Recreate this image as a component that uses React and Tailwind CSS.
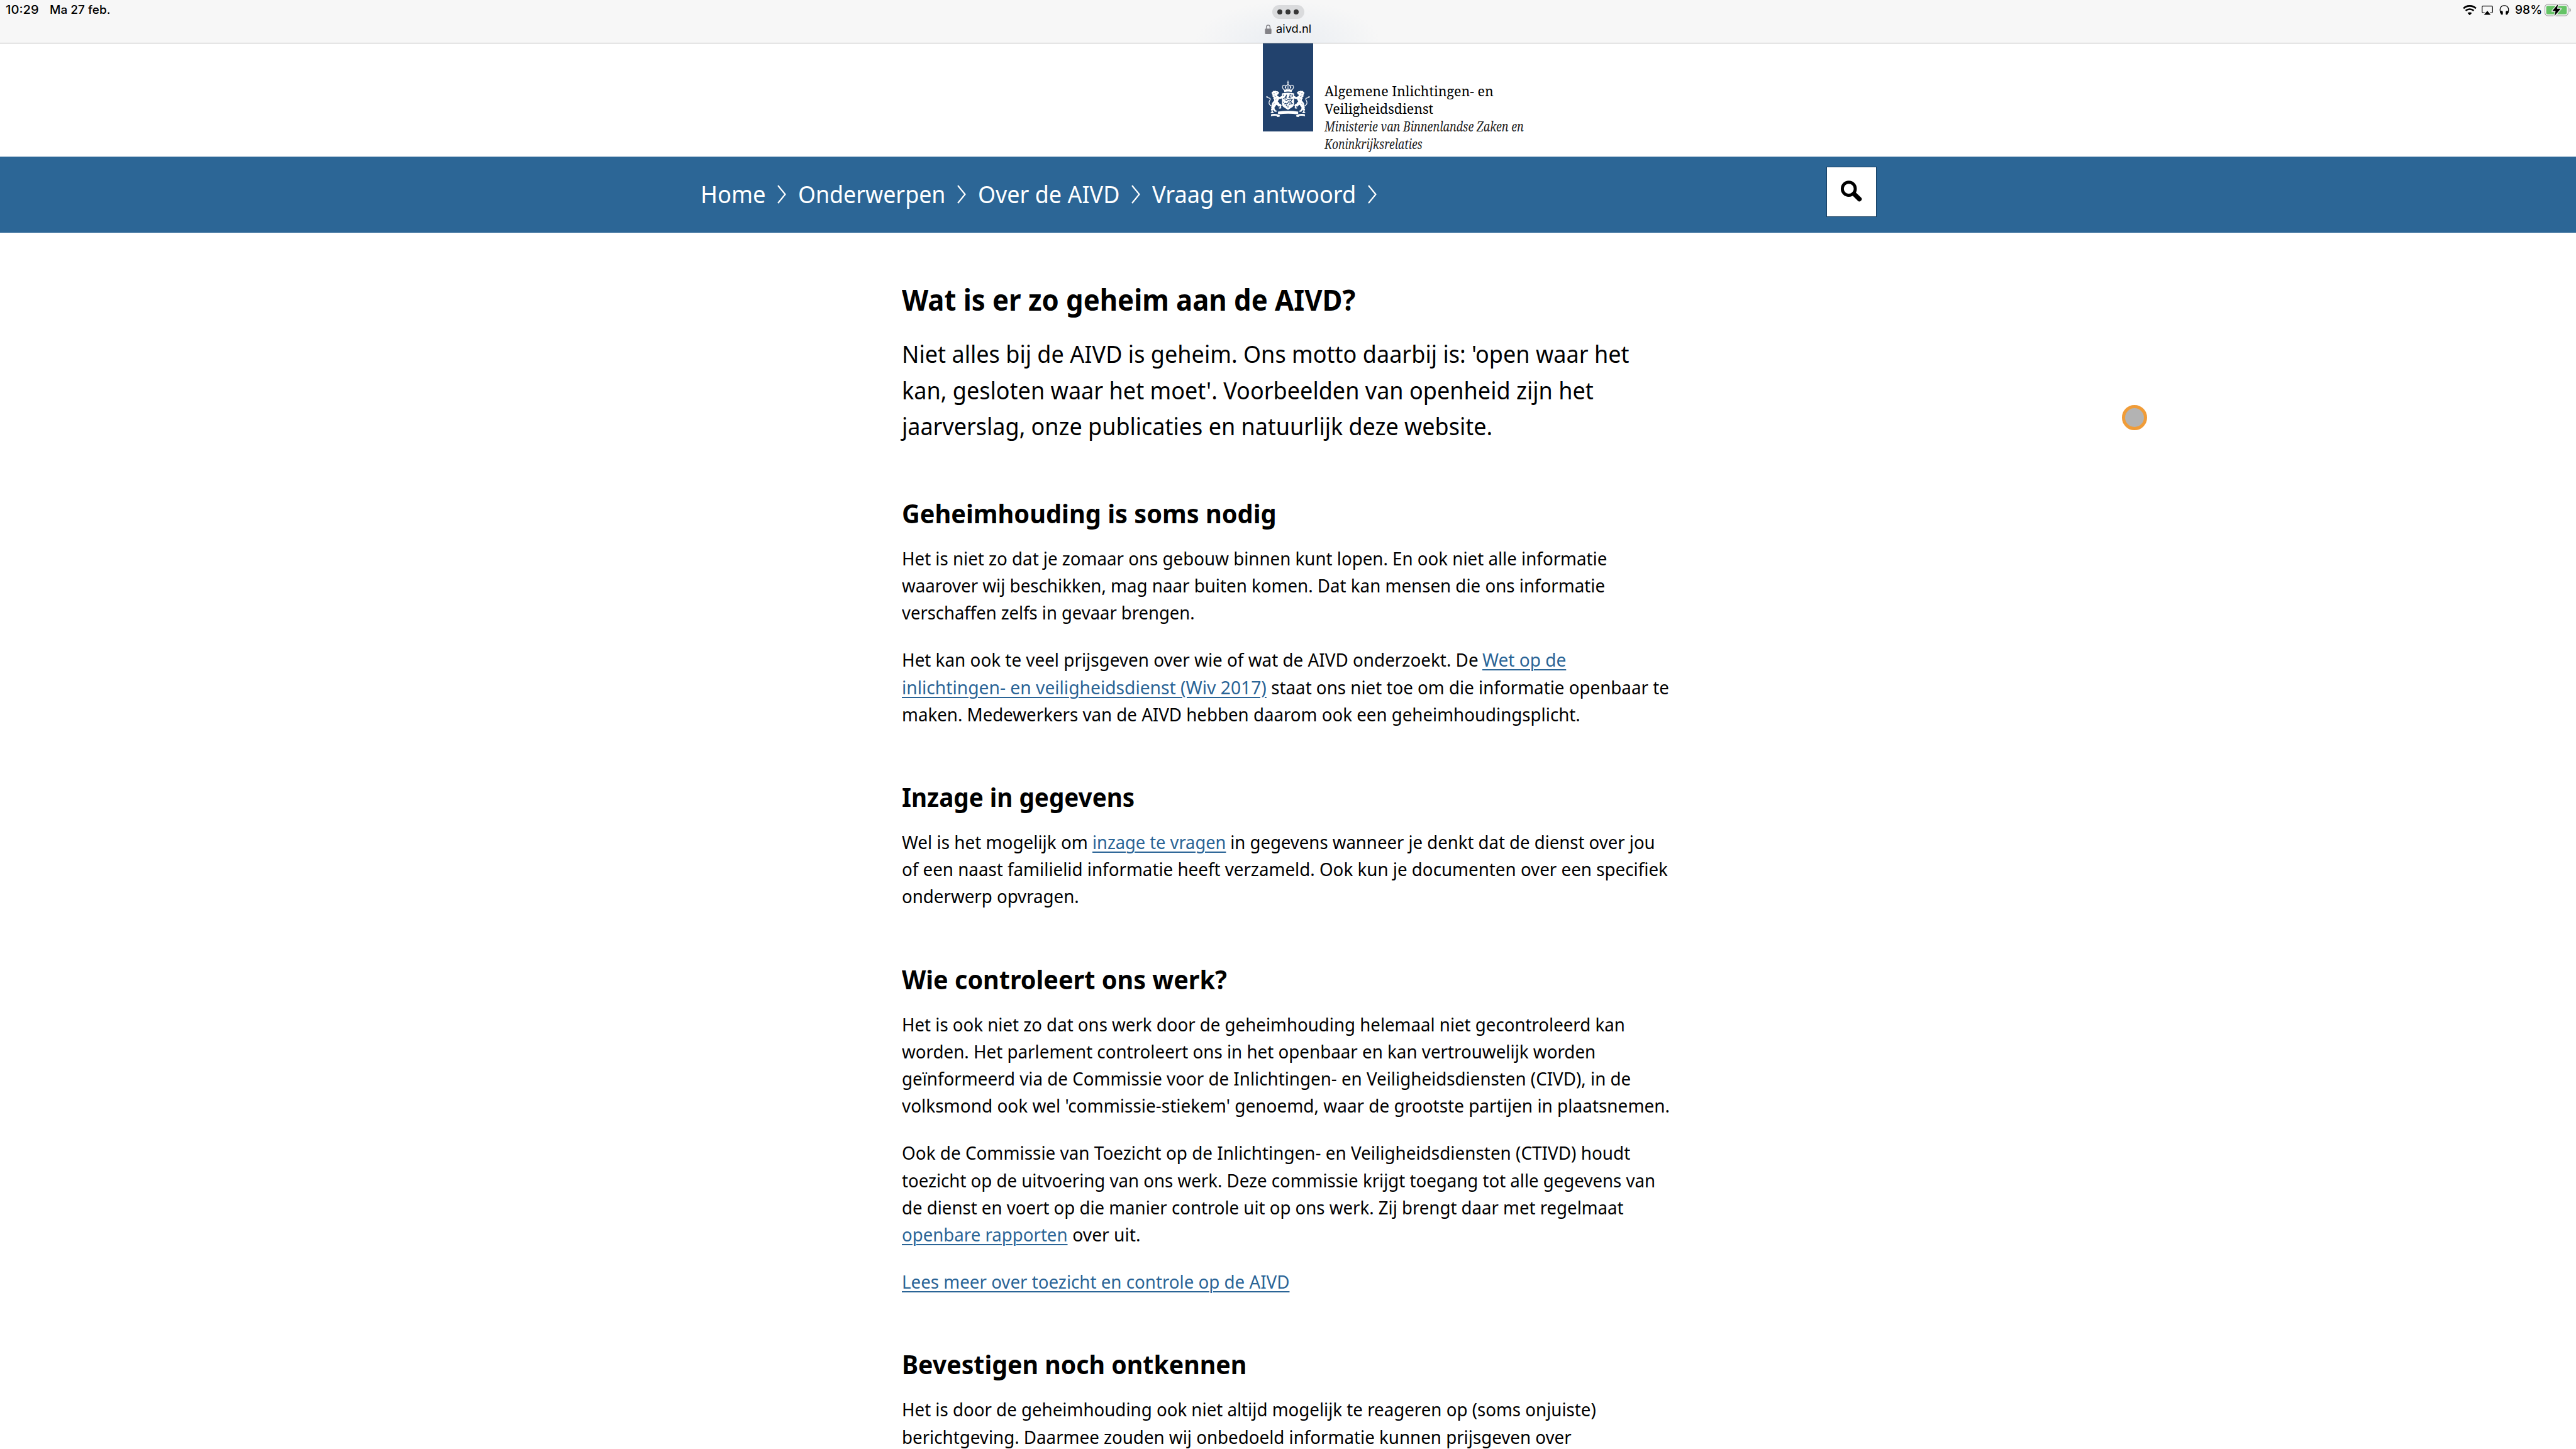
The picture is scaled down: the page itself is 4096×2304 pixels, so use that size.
import { useLayoutEffect, useRef, useState } from "react";

/* One run of text, condensed or widened to an exact advance width. */
function Fit({ w, children }) {
  const ref = useRef(null);
  const [scale, setScale] = useState(1);
  useLayoutEffect(() => {
    setScale(w / ref.current.offsetWidth);
  }, [w]);
  return (
    <span className="block shrink-0" style={{ width: w }}>
      <span ref={ref} className="inline-block origin-left whitespace-pre align-top" style={{ transform: `scaleX(${scale})` }}>
        {children}
      </span>
    </span>
  );
}

function Link({ children }) {
  return (
    <a href="#" className="text-[#2a6496] underline decoration-[2.4px] underline-offset-[4px]">
      {children}
    </a>
  );
}

function Heading({ w, children }) {
  return (
    <h2 className="mt-[80px] text-[42px] leading-[58px] font-bold">
      <Fit w={w}>{children}</Fit>
    </h2>
  );
}

/* Each line is a list of [width, content] runs set side by side. */
function Paragraph({ lines, className }) {
  return (
    <p className={`text-[29.3px] leading-[43.2px] ${className}`}>
      {lines.map((runs, i) => (
        <span key={i} className="flex">
          {runs.map(([w, content], j) => (
            <Fit key={j} w={w}>
              {content}
            </Fit>
          ))}
        </span>
      ))}
    </p>
  );
}

function StatusBar() {
  return (
    <div className="relative flex h-[69px] justify-between bg-[#f7f7f7] font-['Inter','Liberation_Sans',sans-serif] text-[18.3px] leading-[31px] font-[450] text-black">
      <div className="absolute top-0 left-[1898px] h-[69px] w-[300px] bg-[radial-gradient(ellipse_at_bottom,#e9edf2_0%,#f7f7f7_70%)]" />
      <div className="flex gap-[17px] pl-[9px]">
        <Fit w={53}>10:29</Fit>
        <Fit w={97}>Ma 27 feb.</Fit>
      </div>
      <div className="absolute left-1/2 flex -translate-x-1/2 flex-col items-center">
        <div className="mt-[8px] flex h-[22px] w-[51px] items-center justify-center gap-[4.8px] rounded-full bg-[#dadbdd]">
          <span className="size-[8px] rounded-full bg-[#373737]" />
          <span className="size-[8px] rounded-full bg-[#373737]" />
          <span className="size-[8px] rounded-full bg-[#373737]" />
        </div>
        <div className="mt-[2px] flex h-[28px] items-center gap-[7px] text-[17.3px] leading-[28px] font-normal">
          <svg viewBox="0 0 13 18" className="h-[15px] w-[11px]">
            <path d="M3 9V5a3.5 3.9 0 0 1 7 0v4" fill="none" stroke="#838287" strokeWidth="1.6" />
            <rect x="0.3" y="7.8" width="12.4" height="10.2" rx="1.6" fill="#838287" />
          </svg>
          <Fit w={56}>aivd.nl</Fit>
        </div>
      </div>
      <div className="flex pr-[8px]">
        <svg viewBox="106 29 82 60" className="mt-[8px] mr-[8px] h-[16px] w-[22px]">
          <path d="M110 49a53 53 0 0 1 74 0" fill="none" stroke="#000" strokeWidth="10" />
          <path d="M123 63a35 35 0 0 1 48 0" fill="none" stroke="#000" strokeWidth="10" />
          <path d="M134 77a19 19 0 0 1 26 0L147 90z" fill="#000" />
        </svg>
        <svg viewBox="219 30 66 60" className="mt-[8px] mr-[10px] h-[16px] w-[18px]">
          <path d="M236 76h-9a6 6 0 0 1-6-6V42a6 6 0 0 1 6-6h50a6 6 0 0 1 6 6v28a6 6 0 0 1-6 6h-9" fill="none" stroke="#000" strokeWidth="4.5" />
          <path d="M252 65l20 23h-40z" fill="#000" />
        </svg>
        <svg viewBox="323 29 60 62" className="mt-[8px] mr-[9px] h-[16px] w-[16px]">
          <path d="M331 78C321 54 330 32 353 32s32 22 22 46" fill="none" stroke="#000" strokeWidth="5" />
          <path d="M331 66c8-4 13 0 13 6v12c0 6-8 6-12 1l-5-12z" fill="#000" />
          <path d="M375 66c-8-4-13 0-13 6v12c0 6 8 6 12 1l5-12z" fill="#000" />
        </svg>
        <Fit w={43}>98%</Fit>
        <svg viewBox="592 23 158 74" className="mt-[6px] ml-[4px] h-[20px] w-[42px]">
          <rect x="594" y="26" width="139" height="68" rx="18" fill="none" stroke="#a3a3a3" strokeWidth="4.5" />
          <rect x="602" y="35" width="123" height="50" rx="10" fill="#65c466" />
          <path d="M741 48c11 4 11 20 0 24z" fill="#a3a3a3" />
          <path d="M673 24l-35 42h20l-7 30 38-44h-22z" fill="#000" stroke="#f7f7f7" strokeWidth="9" strokeLinejoin="round" paintOrder="stroke" />
        </svg>
      </div>
      <div className="absolute bottom-0 h-px w-full bg-[#b0b0b0]" />
    </div>
  );
}

function LionSupporter() {
  return (
    <g transform="translate(0 4) scale(1 0.95)">
      <path d="M40 88L42 80 48 77 50 73 57 74 63 72 69 75 77 76 83 81 86 87 79 91 80 95 74 96 74 102 79 107 89 111 101 104 109 105 106 109 111 112 105 115 102 120 91 123 85 124 81 132 77 140 83 145 87 153 95 156 100 164 96 173 99 181 90 184 83 182 84 177 91 175 89 170 81 171 76 165 68 161 63 169 57 177 59 187 65 195 73 198 70 203 60 204 55 200 49 191 46 195 48 204 54 209 50 213 39 212 33 209 40 204 39 196 36 189 40 181 37 176 41 168 41 160 43 150 50 140 56 133 54 125 50 120 53 113 45 108 49 103 42 99 46 94z" fill="#fff" />
      <path d="M40 168c-10-5-16-14-15-24 1-9 9-15 7-22-2-6-12-2-18-10l-6-3" fill="none" stroke="#fff" strokeWidth="4.5" />
      <path d="M9 109l7-2 4 6-8 2z" fill="#fff" />
      <path d="M66 83l7 1M52 88l7 3M55 104l12 5M70 122l-8 6M58 150l-8 8" stroke="#22426d" strokeWidth="2" />
    </g>
  );
}

function CoatOfArms() {
  return (
    <svg viewBox="0 0 276 240" className="mt-[56px] ml-[3px] h-[64px] w-[74px]">
      <path d="M138 12v24M132 21h12" stroke="#fff" strokeWidth="4" />
      <circle cx="138" cy="34" r="4.5" fill="#fff" />
      <path d="M116 68c-12-10-14-22-6-27 7-4 13 0 13 6M160 68c12-10 14-22 6-27-7-4-13 0-13 6M127 66c-5-14-4-22 4-27M149 66c5-14 4-22-4-27M138 38v28" fill="none" stroke="#fff" strokeWidth="5" strokeDasharray="7 1" />
      <circle cx="121" cy="52" r="3" fill="#fff" />
      <circle cx="155" cy="52" r="3" fill="#fff" />
      <path d="M113 64l10 4 5-6 5 5 5-6 5 6 5-5 5 6 10-4-3 16c-14-4-30-4-44 0z" fill="#fff" />
      <LionSupporter />
      <g transform="translate(276 0) scale(-1 1)">
        <LionSupporter />
      </g>
      <path d="M102 88q36-7 72 0v64c0 18-22 24-36 35-14-11-36-17-36-35z" fill="#fff" />
      <path d="M108 96h4v6h-4zM108 116h4v6h-4zM108 138h4v6h-4zM164 96h4v12h-4zM164 120h4v6h-4zM164 146h4v6h-4z" fill="#22426d" />
      <path d="M131 96l-13 20h14M129 101l-4 16M147 94l9 1v16l-7 5-9-5M147 100v12M118 126l12 5 7-6 10 2 8-6 5 3-4 12-10 4-6-2-3 8-7 5-8-4-6 5M150 138l9 5-2 9-9-2-4 8M138 160v13M126 156l4 8" fill="none" stroke="#22426d" strokeWidth="4" />
      <path d="M78 197q60-9 121 0l-1 17q-59-10-119 0z" fill="#fff" />
      <path d="M38 212q18-4 33 0l5-3v7l13 2v8q-12 4-17 1l-2-5q-18-2-34 3z" fill="#fff" />
      <path d="M238 212q-18-4-33 0l-5-3v7l-13 2v8q12 4 17 1l2-5q18-2 34 3z" fill="#fff" />
    </svg>
  );
}

function Header() {
  return (
    <header className="flex h-[180px] pl-[2008px]">
      <div className="h-[140px] w-[80px] bg-[#22426d]">
        <CoatOfArms />
      </div>
      <div className="mt-[61.5px] ml-[17.5px] font-['Noto_Serif','Liberation_Serif',serif] text-[22.4px] leading-[28.2px] text-black">
        <Fit w={268.5}>Algemene Inlichtingen- en</Fit>
        <Fit w={173.5}>Veiligheidsdienst</Fit>
        <div className="text-[#222] italic">
          <Fit w={317}>Ministerie van Binnenlandse Zaken en</Fit>
          <Fit w={156}>Koninkrijksrelaties</Fit>
        </div>
      </div>
    </header>
  );
}

const crumbs = [
  ["Home", 103.5],
  ["Onderwerpen", 234.5],
  ["Over de AIVD", 225],
  ["Vraag en antwoord", 324.5],
];

function Nav() {
  return (
    <nav className="flex h-[121px] justify-between bg-[#2c6696] pr-[1112px] pl-[1114px] text-white">
      <ol className="flex pt-[33px] text-[38px] leading-[52px]">
        {crumbs.map(([label, w]) => (
          <li key={label} className="flex">
            <Fit w={w}>{label}</Fit>
            <svg viewBox="0 0 14 30" className="mx-[18.8px] mt-[12px] h-[30px] w-[14px]">
              <path d="M1 1l11.5 14L1 29" fill="none" stroke="#fff" strokeWidth="2.2" />
            </svg>
          </li>
        ))}
      </ol>
      <button className="mt-[15.8px] size-[80px] border-[1.6px] border-[#173e60] bg-white">
        <svg viewBox="2 2 96 96" className="size-full">
          <circle cx="44.7" cy="44" r="12.7" fill="none" stroke="#000" strokeWidth="6" />
          <path d="M55 54l10.5 10.2" stroke="#000" strokeWidth="9" strokeLinecap="round" />
        </svg>
      </button>
    </nav>
  );
}

const secrecy = [
  [[1121.5, "Het is niet zo dat je zomaar ons gebouw binnen kunt lopen. En ook niet alle informatie"]],
  [[1118, "waarover wij beschikken, mag naar buiten komen. Dat kan mensen die ons informatie"]],
  [[466, "verschaffen zelfs in gevaar brengen."]],
];

const law = [
  [
    [923.6, "Het kan ook te veel prijsgeven over wie of wat de AIVD onderzoekt. De "],
    [133, <Link>Wet op de</Link>],
  ],
  [
    [580, <Link>inlichtingen- en veiligheidsdienst (Wiv 2017)</Link>],
    [640, " staat ons niet toe om die informatie openbaar te"],
  ],
  [[1079, "maken. Medewerkers van de AIVD hebben daarom ook een geheimhoudingsplicht."]],
];

const access = [
  [
    [303.3, "Wel is het mogelijk om "],
    [212.2, <Link>inzage te vragen</Link>],
    [682.5, " in gegevens wanneer je denkt dat de dienst over jou"],
  ],
  [[1218, "of een naast familielid informatie heeft verzameld. Ook kun je documenten over een specifiek"]],
  [[281.5, "onderwerp opvragen."]],
];

const control = [
  [[1149.5, "Het is ook niet zo dat ons werk door de geheimhouding helemaal niet gecontroleerd kan"]],
  [[1103.5, "worden. Het parlement controleert ons in het openbaar en kan vertrouwelijk worden"]],
  [[1159, "geïnformeerd via de Commissie voor de Inlichtingen- en Veiligheidsdiensten (CIVD), in de"]],
  [[1221, "volksmond ook wel 'commissie-stiekem' genoemd, waar de grootste partijen in plaatsnemen."]],
];

const supervision = [
  [[1158, "Ook de Commissie van Toezicht op de Inlichtingen- en Veiligheidsdiensten (CTIVD) houdt"]],
  [[1198.5, "toezicht op de uitvoering van ons werk. Deze commissie krijgt toegang tot alle gegevens van"]],
  [[1148, "de dienst en voert op die manier controle uit op ons werk. Zij brengt daar met regelmaat"]],
  [
    [264, <Link>openbare rapporten</Link>],
    [115.5, " over uit."],
  ],
];

const denial = [
  [[1104, "Het is door de geheimhouding ook niet altijd mogelijk te reageren op (soms onjuiste)"]],
  [[1065, "berichtgeving. Daarmee zouden wij onbedoeld informatie kunnen prijsgeven over"]],
];

export default function App() {
  return (
    <div className="relative h-[2304px] w-[4096px] overflow-hidden bg-white font-['Noto_Sans','Liberation_Sans',sans-serif] text-black">
      <StatusBar />
      <Header />
      <Nav />
      <main className="ml-[1433.6px] w-[1230px] pt-[76px]">
        <h1 className="text-[47.3px] leading-[60px] font-bold">
          <Fit w={721.5}>Wat is er zo geheim aan de AIVD?</Fit>
        </h1>
        <div className="mt-[28px] text-[38px] leading-[57.6px]">
          <Fit w={1156.5}>Niet alles bij de AIVD is geheim. Ons motto daarbij is: 'open waar het</Fit>
          <Fit w={1100}>kan, gesloten waar het moet'. Voorbeelden van openheid zijn het</Fit>
          <Fit w={939.5}>jaarverslag, onze publicaties en natuurlijk deze website.</Fit>
        </div>
        <Heading w={595.5}>Geheimhouding is soms nodig</Heading>
        <Paragraph className="mt-[22px]" lines={secrecy} />
        <Paragraph className="mt-[32px]" lines={law} />
        <Heading w={370.5}>Inzage in gegevens</Heading>
        <Paragraph className="mt-[22px]" lines={access} />
        <Heading w={517}>Wie controleert ons werk?</Heading>
        <Paragraph className="mt-[22px]" lines={control} />
        <Paragraph className="mt-[32px]" lines={supervision} />
        <Paragraph className="mt-[32px]" lines={[[[616, <Link>Lees meer over toezicht en controle op de AIVD</Link>]]]} />
        <Heading w={548}>Bevestigen noch ontkennen</Heading>
        <Paragraph className="mt-[22px]" lines={denial} />
      </main>
      <div className="absolute top-[644px] left-[3374.4px] size-[40px] rounded-full border-[5px] border-[#f09c38] bg-[#b3b3b3]" />
    </div>
  );
}
